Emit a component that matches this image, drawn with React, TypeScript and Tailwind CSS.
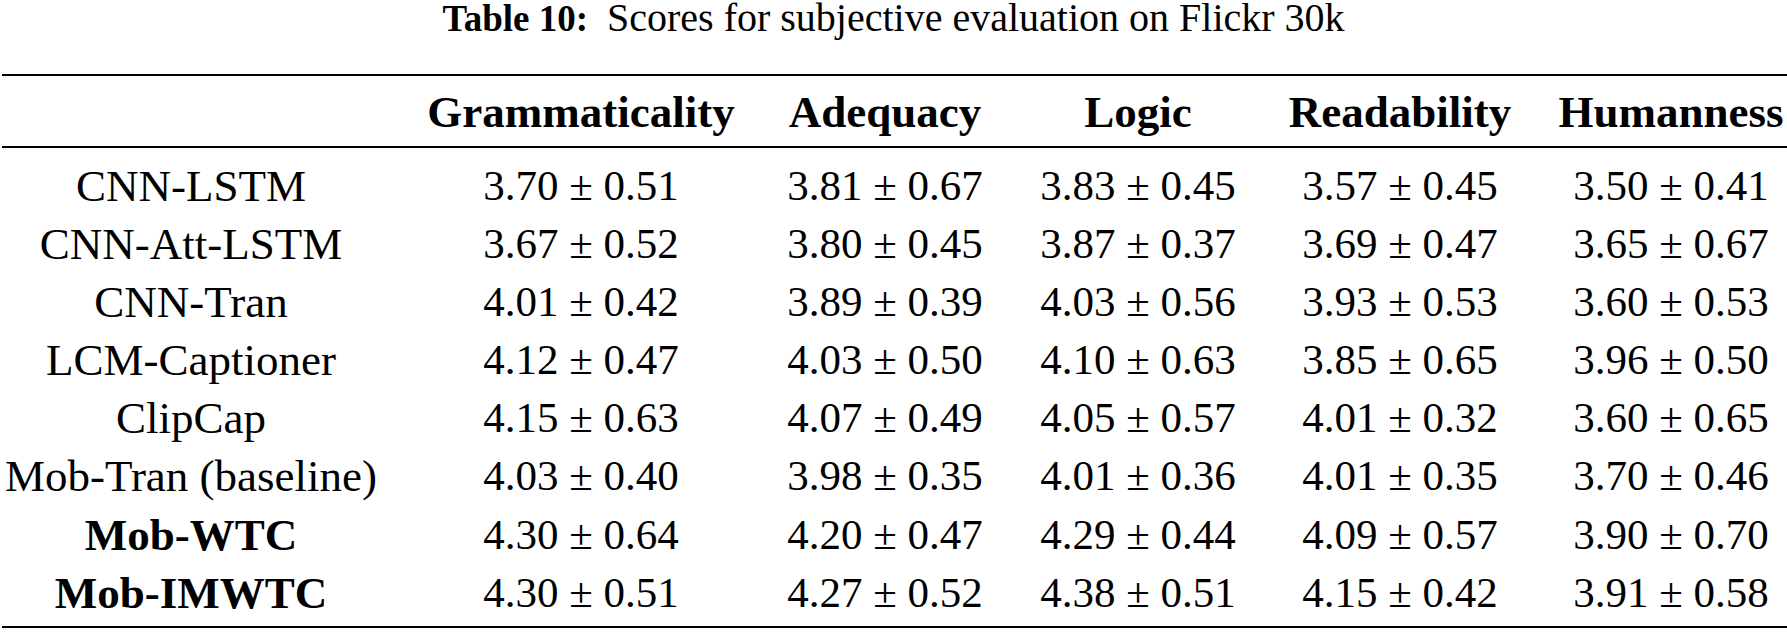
const headers = ['Grammaticality', 'Adequacy', 'Logic', 'Readability', 'Humanness']

const rows: { name: string; bold?: boolean; scores: string[] }[] = [
  { name: 'CNN-LSTM', scores: ['3.70 ± 0.51', '3.81 ± 0.67', '3.83 ± 0.45', '3.57 ± 0.45', '3.50 ± 0.41'] },
  { name: 'CNN-Att-LSTM', scores: ['3.67 ± 0.52', '3.80 ± 0.45', '3.87 ± 0.37', '3.69 ± 0.47', '3.65 ± 0.67'] },
  { name: 'CNN-Tran', scores: ['4.01 ± 0.42', '3.89 ± 0.39', '4.03 ± 0.56', '3.93 ± 0.53', '3.60 ± 0.53'] },
  { name: 'LCM-Captioner', scores: ['4.12 ± 0.47', '4.03 ± 0.50', '4.10 ± 0.63', '3.85 ± 0.65', '3.96 ± 0.50'] },
  { name: 'ClipCap', scores: ['4.15 ± 0.63', '4.07 ± 0.49', '4.05 ± 0.57', '4.01 ± 0.32', '3.60 ± 0.65'] },
  { name: 'Mob-Tran (baseline)', scores: ['4.03 ± 0.40', '3.98 ± 0.35', '4.01 ± 0.36', '4.01 ± 0.35', '3.70 ± 0.46'] },
  { name: 'Mob-WTC', bold: true, scores: ['4.30 ± 0.64', '4.20 ± 0.47', '4.29 ± 0.44', '4.09 ± 0.57', '3.90 ± 0.70'] },
  { name: 'Mob-IMWTC', bold: true, scores: ['4.30 ± 0.51', '4.27 ± 0.52', '4.38 ± 0.51', '4.15 ± 0.42', '3.91 ± 0.58'] },
]

// column widths chosen so each column's centre lands where the reference has it
const cols = 'grid grid-cols-[378px_402px_206px_300px_224px_318px]'

export default function App() {
  return (
    <div className="h-[632px] w-[1787px] overflow-hidden bg-white text-black font-['Liberation_Serif',serif]">
      <h1 className="text-center text-[40px] leading-[36px] font-normal">
        <span className="text-[37px] font-bold">Table 10:</span>{' '}
        <span className="ml-[9px]">Scores for subjective evaluation on Flickr 30k</span>
      </h1>

      <div className="ml-[2px] mt-[37px] border-t-2 border-b-2 border-black text-[43px]">
        <div className={`${cols} h-[72px] items-center border-b-2 border-black text-[45px] font-bold leading-[72px]`}>
          <div />
          {headers.map((h) => (
            <div key={h} className="whitespace-nowrap text-center">
              {h}
            </div>
          ))}
        </div>

        <div className="pt-[9px] pb-[4px]">
          {rows.map((r) => (
            <div key={r.name} className={`${cols} leading-[58.1px]`}>
              <div className={`whitespace-nowrap text-center text-[45px] ${r.bold ? 'font-bold' : ''}`}>{r.name}</div>
              {r.scores.map((s, i) => (
                <div key={i} className="whitespace-nowrap text-center">
                  {s}
                </div>
              ))}
            </div>
          ))}
        </div>
      </div>
    </div>
  )
}
